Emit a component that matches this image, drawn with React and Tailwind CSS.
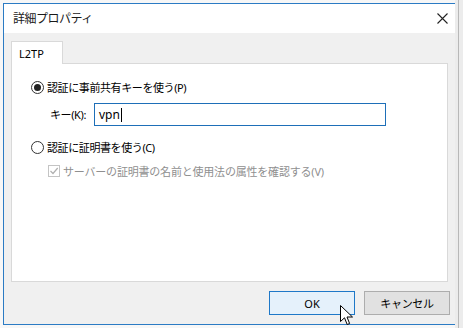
export default function App() {
  return (
    <div className="relative w-[463px] h-[328px] overflow-hidden bg-[#f7f7f7] font-['Noto_Sans','Noto_Sans_CJK_JP',sans-serif] text-[11px] text-black">
      {/* background strips */}
      <div className="absolute right-0 top-0 h-full w-[8px] bg-[#ececec]">
        <div className="ml-[3px] h-full w-px bg-[#b8b8b8]" />
      </div>
      <div className="flex pl-[3px] pt-[3px]">
        <div className="flex h-[322px] w-[453px] flex-col border border-[#2b7bc4] bg-[#f0f0f0]">
          {/* title bar */}
          <div className="flex h-[29px] items-center justify-between bg-white pl-[9px] pr-[7px]">
            <span className="text-[12px] leading-none tracking-[-0.5px] text-[#1a1a1a]">詳細プロパティ</span>
            <svg width="11" height="11" viewBox="0 0 11 11">
              <path d="M0.5 0.5 L10.5 10.5 M10.5 0.5 L0.5 10.5" stroke="#222" strokeWidth="1.1" />
            </svg>
          </div>
          {/* body */}
          <div className="flex flex-1 flex-col px-[7px] pt-[8px]">
            <div className="relative z-10 -mb-px flex h-[23px] w-[52px] items-center border border-b-0 border-[#d9d9d9] bg-white pl-[7px]">
              <span className="text-[11px] leading-none">L2TP</span>
            </div>
            <div className="flex h-[219px] flex-col border border-[#d9d9d9] bg-white pl-[19px] pt-[15px]">
              {/* radio 1 */}
              <div className="flex h-[16px] items-center gap-[3px]">
                <span className="flex h-[13px] w-[13px] items-center justify-center rounded-full border border-[#333]">
                  <span className="h-[7px] w-[7px] rounded-full bg-[#222]" />
                </span>
                <span className="leading-none tracking-[-0.4px]">認証に事前共有キーを使う(P)</span>
              </div>
              {/* key row */}
              <div className="mt-[8px] flex items-center pl-[19px]">
                <span className="w-[44px] leading-none tracking-[-0.4px]">キー(K):</span>
                <div className="flex h-[23px] w-[292px] items-center border border-[#1e6fb8] pl-[4px]">
                  <span className="text-[12px] leading-none">vpn</span>
                  <span className="ml-px h-[14px] w-px bg-black" />
                </div>
              </div>
              {/* radio 2 */}
              <div className="mt-[13px] flex h-[16px] items-center gap-[3px]">
                <span className="h-[13px] w-[13px] rounded-full border border-[#333]" />
                <span className="leading-none tracking-[-0.4px]">認証に証明書を使う(C)</span>
              </div>
              {/* checkbox */}
              <div className="mt-[8px] flex h-[16px] items-center gap-[3px] pl-[17px]">
                <span className="flex h-[12px] w-[12px] items-center justify-center border border-[#c4c4c4]">
                  <svg width="10" height="10" viewBox="0 0 10 10">
                    <path d="M1.5 5 L4 7.5 L8.7 2" fill="none" stroke="#b0b0b0" strokeWidth="1.2" />
                  </svg>
                </span>
                <span className="leading-none tracking-[-0.2px] text-[#8f8f8f]">サーバーの証明書の名前と使用法の属性を確認する(V)</span>
              </div>
            </div>
            {/* buttons */}
            <div className="mt-[9px] flex justify-end gap-[9px]">
              <div className="flex h-[24px] w-[86px] items-center justify-center border border-[#1e78c8] bg-[#e5f1fb]">
                <span className="leading-none">OK</span>
              </div>
              <div className="-mr-[2px] flex h-[24px] w-[86px] items-center justify-center border border-[#adadad] bg-[#e1e1e1]">
                <span className="leading-none tracking-[-0.3px]">キャンセル</span>
              </div>
            </div>
          </div>
        </div>
      </div>
      {/* mouse cursor */}
      <svg className="absolute left-[340px] top-[305px]" width="14" height="22" viewBox="0 0 14 22">
        <path d="M0.5 0.5 L0.5 16.5 L4.5 12.8 L7.2 19.5 L9.6 18.5 L7 12 L12.5 12 Z" fill="white" stroke="black" strokeWidth="1" strokeLinejoin="miter" />
      </svg>
    </div>
  );
}
